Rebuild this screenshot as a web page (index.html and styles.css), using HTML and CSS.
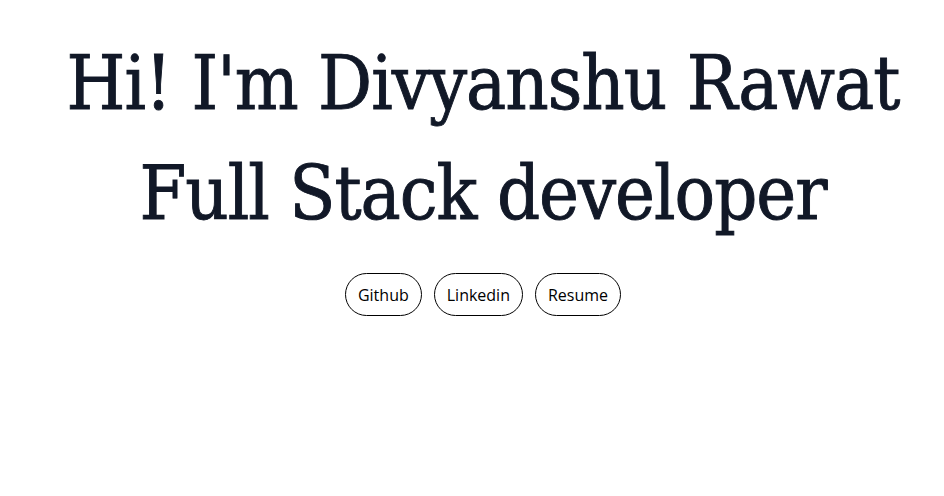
FILE: index.html
```html
<!DOCTYPE html>
<html lang="en">
<head>
<meta charset="utf-8">
<title>Divyanshu Rawat</title>
<link rel="stylesheet" href="styles.css">
</head>
<body>
<main class="hero">
  <h1 class="title">Hi! I'm Divyanshu Rawat<br>Full Stack developer</h1>
  <nav class="links">
    <a class="pill" href="#">Github</a>
    <a class="pill" href="#">Linkedin</a>
    <a class="pill" href="#">Resume</a>
  </nav>
</main>
</body>
</html>
```
FILE: styles.css
```css
html, body {
  margin: 0;
  padding: 0;
  background: #ffffff;
}
.hero {
  display: flex;
  flex-direction: column;
  align-items: center;
  padding-top: 28px;
  padding-left: 22px;
}
.title {
  margin: 0;
  font-family: "DejaVu Serif", serif;
  font-stretch: condensed;
  font-weight: 400;
  font-size: 75px;
  line-height: 110px;
  color: #111827;
  text-align: center;
  letter-spacing: -1px;
  -webkit-text-stroke: 0.9px #111827;
}
.links {
  display: flex;
  gap: 12px;
  margin-top: 25px;
}
.pill {
  display: flex;
  align-items: center;
  height: 43px;
  padding: 0 12px;
  border: 1px solid #000;
  border-radius: 9999px;
  box-sizing: border-box;
  font-family: "Open Sans", sans-serif;
  font-size: 16px;
  color: #000;
  text-decoration: none;
}
```
